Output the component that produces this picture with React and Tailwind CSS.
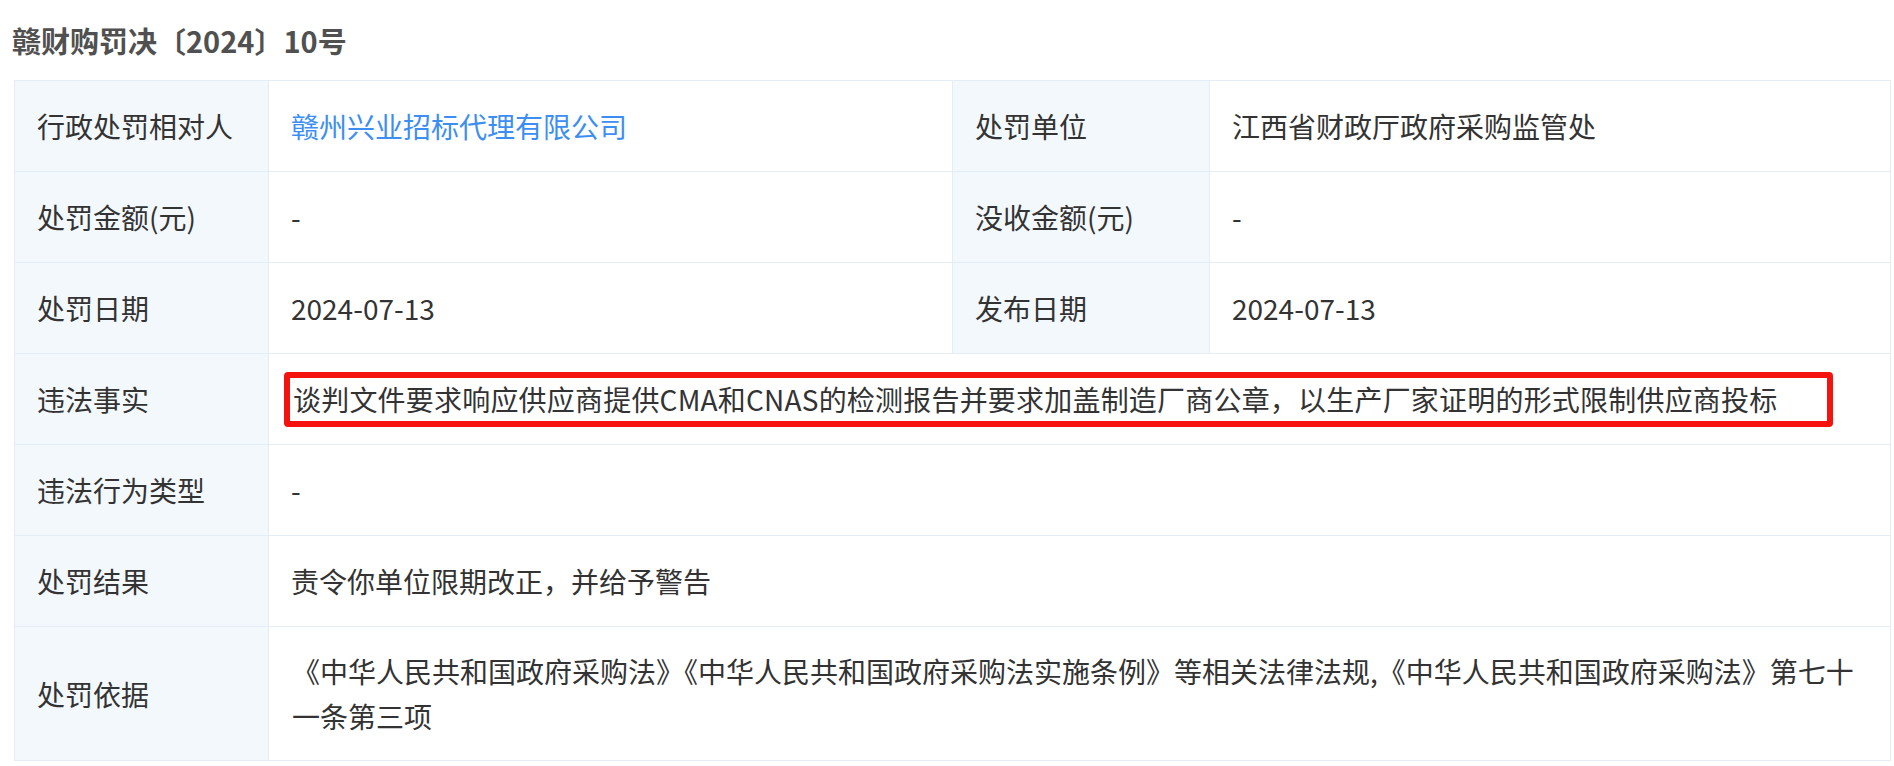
const rows = [
  { label: "行政处罚相对人", value: "赣州兴业招标代理有限公司", link: true, label2: "处罚单位", value2: "江西省财政厅政府采购监管处" },
  { label: "处罚金额(元)", value: "-", label2: "没收金额(元)", value2: "-" },
  { label: "处罚日期", value: "2024-07-13", label2: "发布日期", value2: "2024-07-13" },
];

const wide = [
  { label: "违法行为类型", value: "-" },
  { label: "处罚结果", value: "责令你单位限期改正，并给予警告" },
];

const Label = ({ children }) => (
  <td className="bg-[#f3f8fd] border border-[#e4ecf6] pl-[22px] align-middle">{children}</td>
);

const Cell = ({ children, span = 1 }) => (
  <td colSpan={span} className="bg-white border border-[#e4ecf6] pl-[22px] pr-[14px] align-middle">
    {children}
  </td>
);

export default function App() {
  return (
    <div
      className="w-[1894px] min-h-[766px] bg-white pl-[14px] pr-[3px] pt-[20px] text-[#333]"
      style={{ fontFamily: '"Noto Sans CJK SC", "Noto Sans", sans-serif' }}
    >
      {/* Title */}
      <h1 className="ml-[-2px] mb-[20px] h-[40px] text-[29px] leading-[40px] font-bold text-[#505050]">
        赣财购罚决〔2024〕10号
      </h1>

      <table className="w-[1877px] table-fixed border-collapse text-[28px] leading-[40px]">
        <colgroup>
          <col className="w-[254px]" />
          <col className="w-[684px]" />
          <col className="w-[257px]" />
          <col />
        </colgroup>
        <tbody>
          {rows.map((r) => (
            <tr key={r.label} className="h-[91px]">
              <Label>{r.label}</Label>
              <Cell>
                <span className={r.link ? "text-[#3c8ef3]" : ""}>{r.value}</span>
              </Cell>
              <Label>{r.label2}</Label>
              <Cell>{r.value2}</Cell>
            </tr>
          ))}

          {/* highlighted fact row */}
          <tr className="h-[91px]">
            <Label>违法事实</Label>
            <td colSpan={3} className="bg-white border border-[#e4ecf6] pl-[15px] align-middle">
              <div className="w-[1549px] h-[55px] border-[6px] border-[#f5130f] rounded-[4px] flex items-center pl-[3px] whitespace-nowrap tracking-[0.2px]">
                谈判文件要求响应供应商提供CMA和CNAS的检测报告并要求加盖制造厂商公章，以生产厂家证明的形式限制供应商投标
              </div>
            </td>
          </tr>

          {wide.map((r) => (
            <tr key={r.label} className="h-[91px]">
              <Label>{r.label}</Label>
              <Cell span={3}>{r.value}</Cell>
            </tr>
          ))}

          <tr className="h-[134px]">
            <Label>处罚依据</Label>
            <td colSpan={3} className="bg-white border border-[#e4ecf6] pl-[23px] pr-[10px] align-middle leading-[45px]">
              《中华人民共和国政府采购法》《中华人民共和国政府采购法实施条例》等相关法律法规,《中华人民共和国政府采购法》第七十一条第三项
            </td>
          </tr>
        </tbody>
      </table>
    </div>
  );
}
